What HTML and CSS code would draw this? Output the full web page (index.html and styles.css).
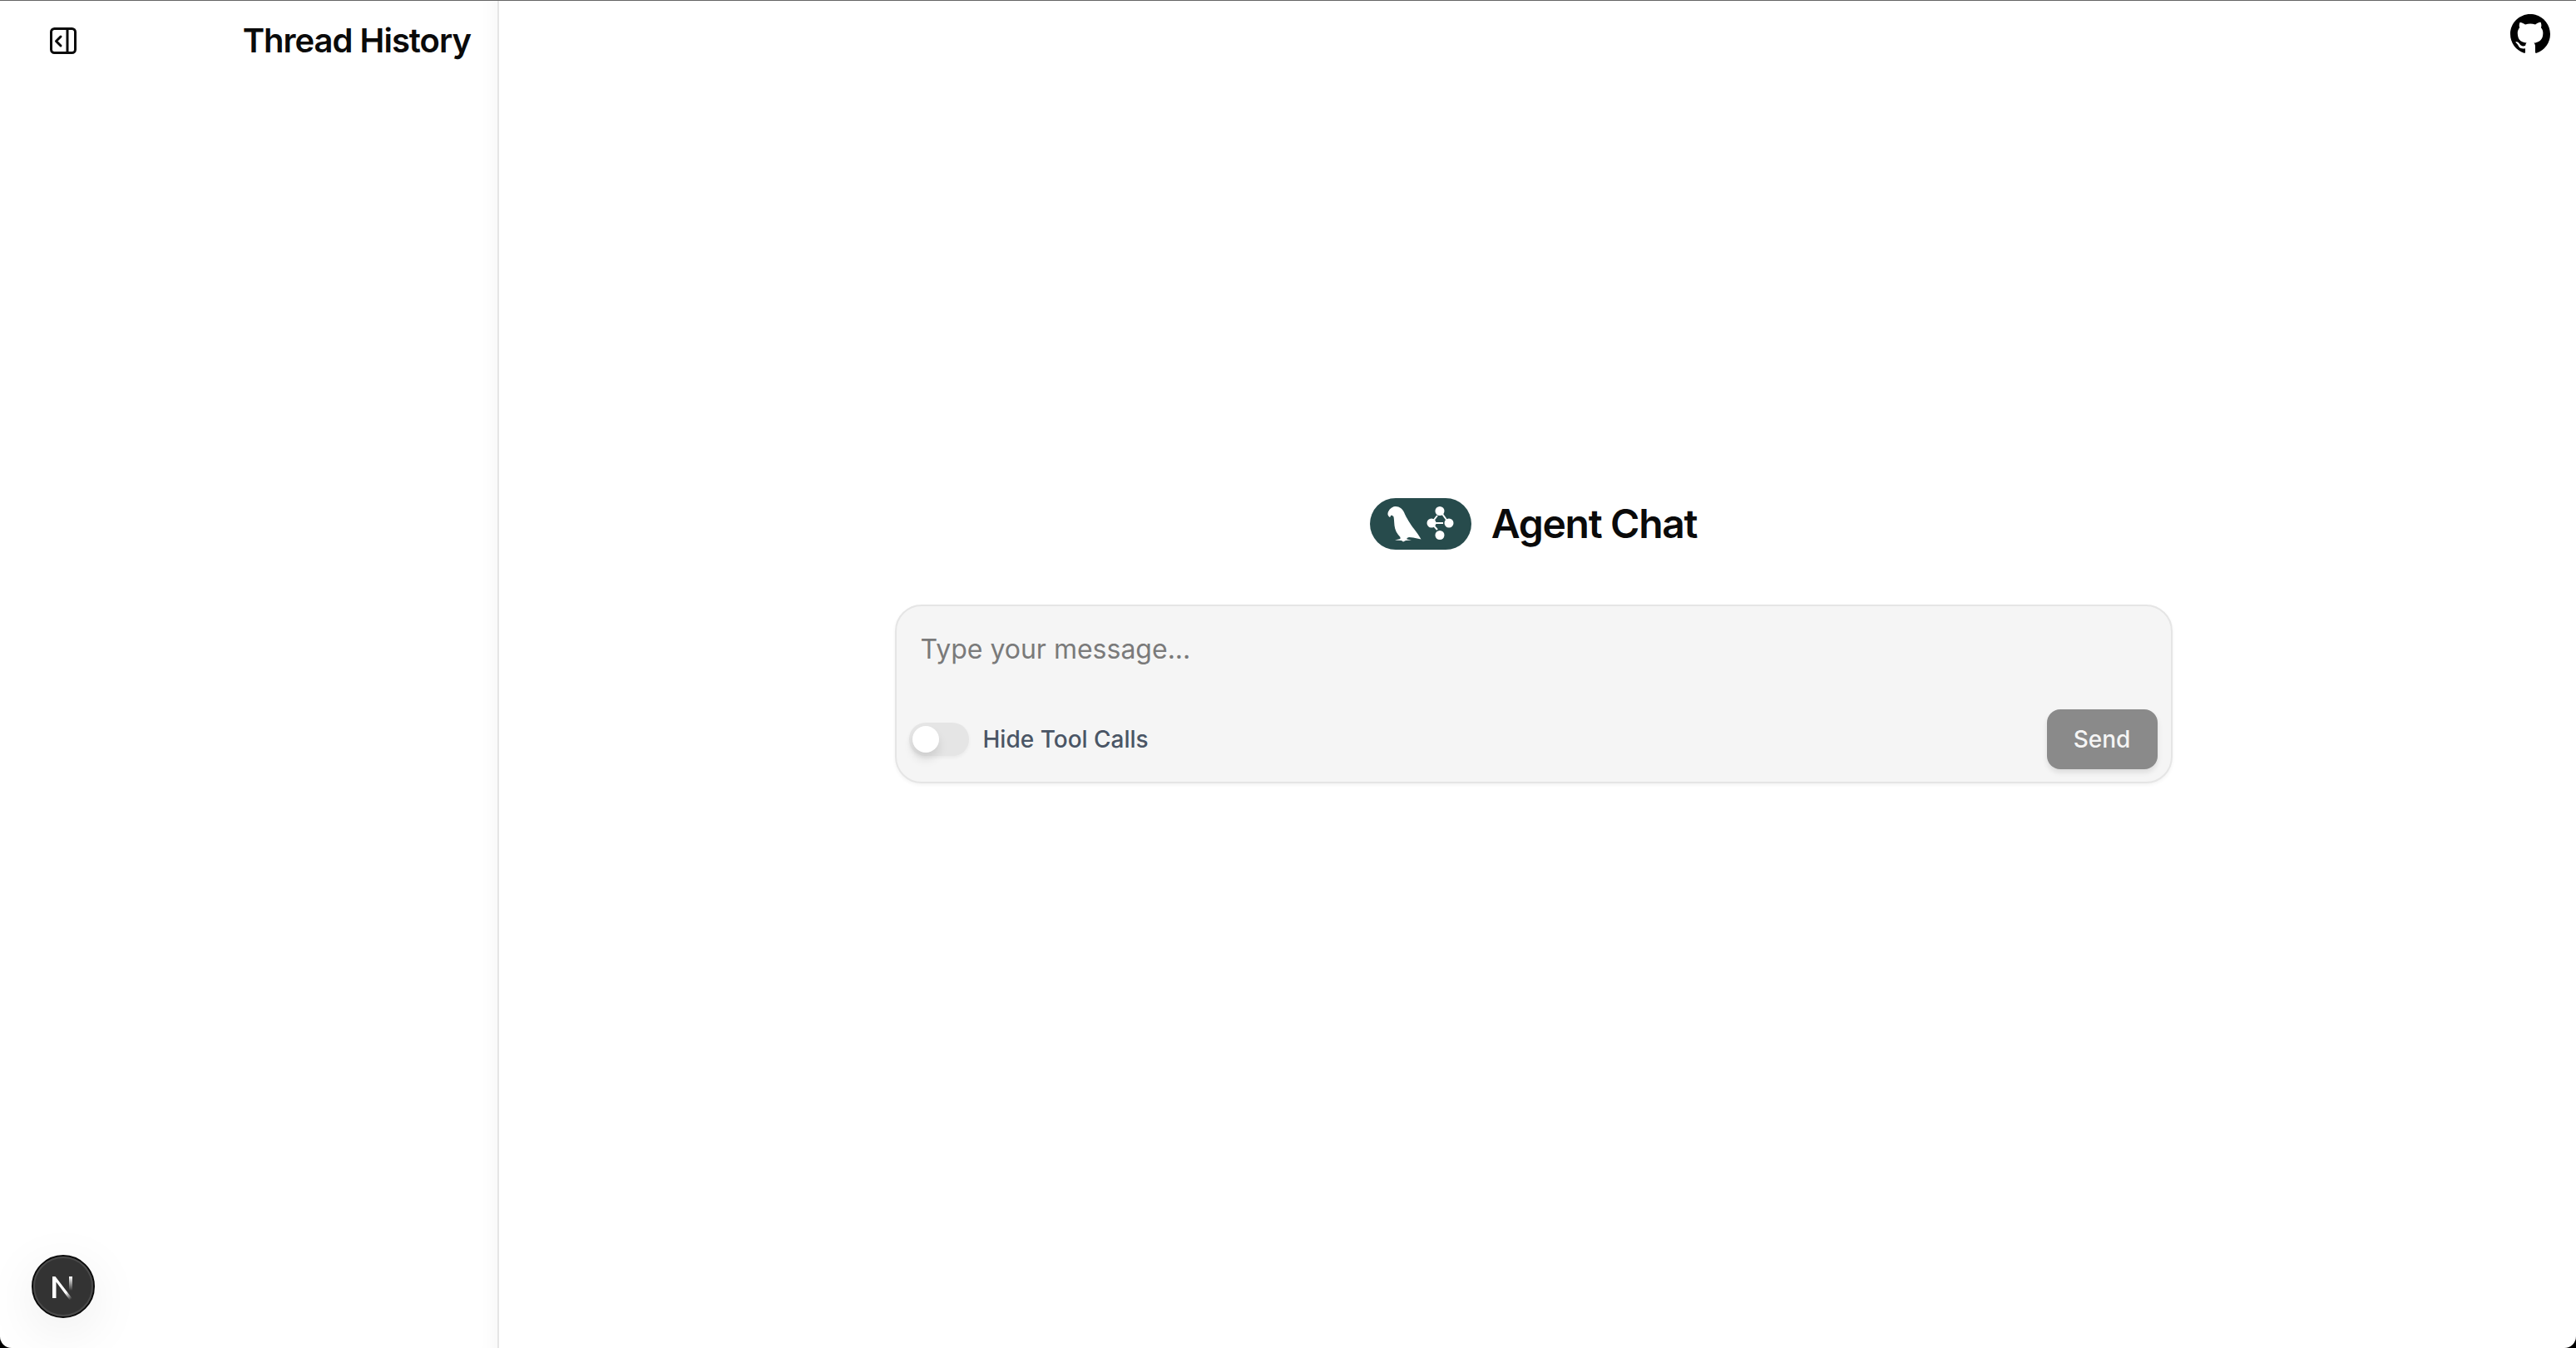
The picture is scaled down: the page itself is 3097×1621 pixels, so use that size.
FILE: index.html
```html
<!DOCTYPE html>
<html lang="en">
<head>
  <meta charset="UTF-8" />
  <title>Agent Chat</title>
  <link rel="stylesheet" href="styles.css">
</head>
<body>
  <div class="app">

    <!-- Sidebar -->
    <div class="sidebar">
      <div class="sidebar-head">
        <button class="icon-btn" aria-label="Toggle sidebar">
          <svg width="36" height="36" viewBox="0 0 36 36" fill="none" stroke="#0a0a0a" stroke-width="3" stroke-linecap="round" stroke-linejoin="round">
            <rect x="3.500" y="3.500" width="29" height="29" rx="4" />
            <path d="M23 3.500v29" />
            <path d="M15 13l-5.500 5.500 5.500 5.500" />
          </svg>
        </button>
        <h1 class="sidebar-title">Thread History</h1>
      </div>
    </div>

    <!-- Main -->
    <div class="main">
      <a class="github" href="#" aria-label="GitHub">
        <svg width="48" height="48" viewBox="0 0 16 16" fill="#000">
          <path d="M8 0C3.58 0 0 3.58 0 8c0 3.54 2.29 6.53 5.47 7.59.4.07.55-.17.55-.38 0-.19-.01-.82-.01-1.49-2.01.37-2.53-.49-2.69-.94-.09-.23-.48-.94-.82-1.13-.28-.15-.68-.52-.01-.53.63-.01 1.08.58 1.23.82.72 1.21 1.87.87 2.33.66.07-.52.28-.87.51-1.07-1.78-.2-3.64-.89-3.64-3.95 0-.87.31-1.59.82-2.15-.08-.2-.36-1.02.08-2.12 0 0 .67-.21 2.2.82.64-.18 1.32-.27 2-.27s1.36.09 2 .27c1.53-1.04 2.2-.82 2.2-.82.44 1.1.16 1.92.08 2.12.51.56.82 1.27.82 2.15 0 3.07-1.87 3.75-3.65 3.95.29.25.54.73.54 1.48 0 1.07-.01 1.93-.01 2.2 0 .21.15.46.55.38A8.01 8.01 0 0 0 16 8c0-4.42-3.58-8-8-8z" />
        </svg>
      </a>

      <div class="chat-center">
        <div class="brand">
          <svg class="brand-logo" width="122" height="62" viewBox="0 0 122 62">
            <rect width="122" height="62" rx="31" fill="#274b4c" />
            <path fill="#fff" d="M21.500 18C22.500 14 26 10.500 30 10C35 9.500 39 12.500 41 17C44 24 49 32 53 37C56 41 59 45 61.500 49.500L52 47.500L47 47L44.500 48L44.500 49.500L50 50.500L43 51L40 52.500L38 51L30 50.500L36.500 49L36.500 47C32.500 43 30 38 29.500 33C29 28 29 25 28.500 22.500C27.500 21 26 20.500 25 21C25 22 24 23 24 23C22.500 22 21 20.500 21.500 18Z" />
            <g fill="#fff">
              <circle cx="84" cy="15.500" r="5.500" />
              <circle cx="95" cy="30" r="5.500" />
              <circle cx="84" cy="44.500" r="5.500" />
              <circle cx="74" cy="30" r="5.500" />
            </g>
            <path fill="none" stroke="#fff" stroke-width="2" d="M74 30h14M74 30l7-9M87 19l5 7M74 30l7 8" />
          </svg>
          <h1 class="brand-title">Agent Chat</h1>
        </div>

        <div class="composer">
          <textarea class="composer-input" rows="1" placeholder="Type your message..."></textarea>
          <div class="composer-foot">
            <label class="toggle-row">
              <span class="toggle"><span class="toggle-thumb"></span></span>
              <span class="toggle-label">Hide Tool Calls</span>
            </label>
            <button class="send-btn">Send</button>
          </div>
        </div>
      </div>
    </div>

    <!-- Next dev badge -->
    <div class="next-badge">
      <svg width="32" height="32" viewBox="0 0 32 32" fill="none">
        <defs>
          <linearGradient id="nextFadeA" x1="8" y1="8" x2="26" y2="31" gradientUnits="userSpaceOnUse">
            <stop offset="0.65" stop-color="#fff" />
            <stop offset="1" stop-color="#fff" stop-opacity="0" />
          </linearGradient>
          <linearGradient id="nextFadeB" x1="25" y1="4" x2="25" y2="21" gradientUnits="userSpaceOnUse">
            <stop offset="0" stop-color="#fff" />
            <stop offset="1" stop-color="#fff" stop-opacity="0" />
          </linearGradient>
        </defs>
        <path d="M3 30V4h3.500L28 32h-4.500L7.500 10.500V30z" fill="url(#nextFadeA)" />
        <rect x="23" y="4" width="4" height="18" fill="url(#nextFadeB)" />
      </svg>
    </div>

  </div>
</body>
</html>
```

FILE: styles.css
```css
/* Genel */
html, body {
  height: 100%;
}
body {
  margin: 0;
  background: #000;
  color: #0a0a0a;
  font-family: Inter, "Liberation Sans", sans-serif;
}
.app {
  height: 100%;
  display: flex;
  background: #fff;
  border-top: 1px solid #666;
  border-radius: 0 0 14px 14px;
  box-sizing: border-box;
  position: relative;
  overflow: hidden;
}

/* Sidebar */
.sidebar {
  width: 600px;
  flex-shrink: 0;
  box-sizing: border-box;
  border-right: 2px solid #e5e5e5;
  box-shadow: inset -24px 0 24px -24px rgba(0,0,0,0.05);
}
.sidebar-head {
  display: flex;
  justify-content: space-between;
  align-items: center;
  padding: 24px 32px 0 58px;
}
.icon-btn {
  background: none;
  border: none;
  padding: 0;
  display: flex;
}
.sidebar-title {
  margin: 0;
  font-size: 40px;
  line-height: 48px;
  font-weight: 600;
  letter-spacing: -1px;
}

/* Main */
.main {
  flex: 1;
  position: relative;
  display: flex;
  justify-content: center;
  padding-top: 598px;
  box-sizing: border-box;
}
.github {
  position: absolute;
  top: 16px;
  right: 31px;
  display: flex;
}
.chat-center {
  width: 1536px;
  margin-left: -10px;
}
.brand {
  display: flex;
  justify-content: center;
  align-items: center;
  gap: 24px;
  height: 62px;
}
.brand-title {
  margin: 0;
  font-size: 48px;
  line-height: 62px;
  font-weight: 600;
  letter-spacing: -1.3px;
}

/* Composer */
.composer {
  margin-top: 66px;
  box-sizing: border-box;
  height: 215px;
  background: #f5f5f5;
  border: 2px solid #e5e5e5;
  border-radius: 32px;
  box-shadow: 0 2px 4px rgba(0,0,0,0.05);
  display: flex;
  flex-direction: column;
  justify-content: space-between;
  padding: 0 16px 15px 15px;
}
.composer-input {
  border: none;
  outline: none;
  resize: none;
  background: transparent;
  font-family: inherit;
  font-size: 32px;
  line-height: 48px;
  padding: 28px 14px 0;
  color: #0a0a0a;
}
.composer-input::placeholder {
  color: #7a7a7a;
}
.composer-foot {
  display: flex;
  justify-content: space-between;
  align-items: center;
}
.toggle-row {
  display: flex;
  align-items: center;
  gap: 17px;
}
.toggle {
  width: 72px;
  height: 40px;
  box-sizing: border-box;
  padding: 4px;
  border-radius: 20px;
  background: #e5e5e5;
  display: block;
  box-shadow: 0 2px 4px rgba(0,0,0,0.05);
}
.toggle-thumb {
  display: block;
  width: 32px;
  height: 32px;
  border-radius: 50%;
  background: #fff;
  box-shadow: 0 8px 12px rgba(0,0,0,0.1);
}
.toggle-label {
  font-size: 28px;
  font-weight: 500;
  color: #4a5565;
}
.send-btn {
  width: 133px;
  height: 72px;
  border: none;
  border-radius: 16px;
  background: #8a8a8a;
  color: #f5f5f5;
  font-family: inherit;
  font-size: 28px;
  font-weight: 500;
  box-shadow: 0 4px 6px rgba(0,0,0,0.1);
}

/* Next dev badge */
.next-badge {
  position: absolute;
  left: 38px;
  bottom: 36px;
  width: 76px;
  height: 76px;
  box-sizing: border-box;
  border-radius: 50%;
  background: #333;
  border: 2px solid #0a0a0a;
  outline: 2px solid #4a4a4a;
  outline-offset: -4px;
  display: flex;
  align-items: center;
  justify-content: center;
  box-shadow: 0 16px 64px rgba(0,0,0,0.08);
}
```
